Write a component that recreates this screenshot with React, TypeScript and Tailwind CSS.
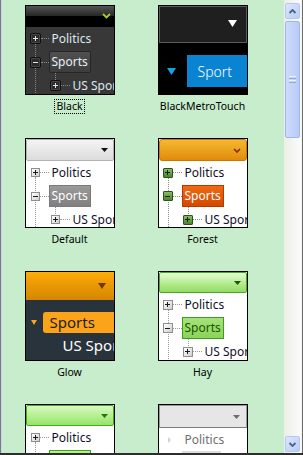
import React from "react";

const TREE = "font-['Noto_Sans',sans-serif] text-[12px] leading-none whitespace-nowrap";

function Glyph({ minus, color }: { minus?: boolean; color: string }) {
  return (
    <svg width="5" height="5" viewBox="0 0 5 5" className="block">
      <path d={minus ? "M0 2.5H5" : "M0 2.5H5M2.5 0V5"} stroke={color} strokeWidth="1" />
    </svg>
  );
}

type Theme = {
  box: string;
  glyph: string;
  line: string;
  text: string;
  hl: string;
  boxPl: string;
  usPl: string;
  conn: string;
  usConn: string;
};

function ClassicTree({ t }: { t: Theme }) {
  return (
    <div className={`relative flex flex-col ${TREE}`}>
      <div className={`absolute left-[9px] top-[16px] h-[200px] border-l border-dotted ${t.line}`} />
      <div className={`absolute left-[29px] top-[45px] h-[10px] border-l border-dotted ${t.line}`} />
      <div className={`relative flex items-center h-[23.5px] shrink-0 ${t.boxPl}`}>
        <div className={`flex items-center justify-center shrink-0 ${t.box}`}>
          <Glyph color={t.glyph} />
        </div>
        <div className={`shrink-0 border-t border-dotted ${t.conn} ${t.line}`} />
        <div className={`pl-[3px] ${t.text}`}>Politics</div>
      </div>
      <div className={`relative flex items-center h-[23.5px] shrink-0 ${t.boxPl}`}>
        <div className={`flex items-center justify-center shrink-0 ${t.box}`}>
          <Glyph minus color={t.glyph} />
        </div>
        <div className={`shrink-0 border-t border-dotted ${t.conn} ${t.line}`} />
        <div className={`flex items-center h-[22px] pl-[2px] pr-[2px] ${t.hl}`}>Sports</div>
      </div>
      <div className={`relative flex items-center h-[23.5px] shrink-0 ${t.usPl}`}>
        <div className={`flex items-center justify-center shrink-0 ${t.box}`}>
          <Glyph color={t.glyph} />
        </div>
        <div className={`shrink-0 border-t border-dotted ${t.usConn} ${t.line}`} />
        <div className={`pl-[3px] ${t.text}`}>US Sports</div>
      </div>
    </div>
  );
}

const grayBox =
  "w-[9px] h-[9px] border border-[#8e8e8e] bg-linear-to-br from-white to-[#cfcfcf]";

const blackTheme: Theme = {
  box: "w-[11px] h-[11px] rounded-[2px] border border-[#101010] bg-[#2b2b2b] shadow-[inset_0_0_0_1px_#474747]",
  glyph: "#e4e4e4",
  line: "border-[#8a8a8a]",
  text: "text-[#dde8f1]",
  hl: "rounded-[2px] border border-[#262626] bg-linear-to-b from-[#505050] to-[#3d3d3d] text-[#e6f0f8]",
  boxPl: "pl-[4px]",
  usPl: "pl-[24px]",
  conn: "w-[8px]",
  usConn: "w-[9px]",
};

const defaultTheme: Theme = {
  box: grayBox,
  glyph: "#1a1a1a",
  line: "border-[#9a9a9a]",
  text: "text-[#10102a]",
  hl: "border border-[#7a7a7a] bg-linear-to-b from-[#9a9a9a] to-[#808080] text-white",
  boxPl: "pl-[5px]",
  usPl: "pl-[25px]",
  conn: "w-[9px]",
  usConn: "w-[10px]",
};

const forestTheme: Theme = {
  box: "w-[10px] h-[10px] rounded-[1px] border border-[#2c5418] bg-linear-to-b from-[#8cbc66] to-[#4f8231]",
  glyph: "#0e2606",
  line: "border-[#8c8c8c]",
  text: "text-[#10102a]",
  hl: "border border-[#b83800] bg-linear-to-b from-[#f06a14] to-[#d24a00] text-white",
  boxPl: "pl-[4px]",
  usPl: "pl-[24px]",
  conn: "w-[9px]",
  usConn: "w-[9px]",
};

const hayTheme: Theme = {
  box: "w-[10px] h-[10px] border border-[#8e8e8e] bg-linear-to-br from-white to-[#cfcfcf]",
  glyph: "#1a1a1a",
  line: "border-[#9a9a9a]",
  text: "text-[#10102a]",
  hl: "border border-[#3f9a1e] bg-linear-to-b from-[#a6e27a] to-[#8ad45a] text-[#1c5200]",
  boxPl: "pl-[4px]",
  usPl: "pl-[24px]",
  conn: "w-[9px]",
  usConn: "w-[9px]",
};

const limeTheme: Theme = {
  box: grayBox,
  glyph: "#1a1a1a",
  line: "border-[#9a9a9a]",
  text: "text-[#10102a]",
  hl: "border border-[#3aa81a] bg-linear-to-b from-[#b8f090] to-[#8ede58] text-[#1c5200]",
  boxPl: "pl-[5px]",
  usPl: "pl-[25px]",
  conn: "w-[9px]",
  usConn: "w-[10px]",
};

function Tile({ cls, children }: { cls: string; children: React.ReactNode }) {
  return (
    <div className={`w-[90px] h-[90px] shrink-0 border border-black overflow-hidden flex flex-col ${cls}`}>
      {children}
    </div>
  );
}

function Cell({ label, focused, children }: { label: string; focused?: boolean; children: React.ReactNode }) {
  return (
    <div className="h-[133px] flex flex-col items-center pt-[5px]">
      {children}
      <div
        className={`mt-[4px] h-[15px] px-[1px] border leading-[13px] text-[10.5px] text-black font-['Noto_Sans',sans-serif] whitespace-nowrap ${
          focused ? "border-dotted border-black" : "border-transparent"
        }`}
      >
        {label}
      </div>
    </div>
  );
}

function Down({ color, w = 7, h = 4 }: { color: string; w?: number; h?: number }) {
  return (
    <svg width={w} height={h} viewBox={`0 0 ${w} ${h}`} className="block">
      <path d={`M0 0H${w}L${w / 2} ${h}Z`} fill={color} />
    </svg>
  );
}

function BlackTile() {
  return (
    <Tile cls="bg-[#383838]">
      <div className="relative h-[21px] shrink-0">
        <div className="h-[10px] bg-linear-to-b from-[#555555] to-[#262626]" />
        <div className="h-[11px] bg-black" />
        <svg className="absolute left-[76px] top-[7px]" width="9" height="6" viewBox="0 0 9 6">
          <path d="M1 1L4.5 4.5L8 1" stroke="#9fd12e" strokeWidth="1.8" fill="none" />
        </svg>
      </div>
      <ClassicTree t={blackTheme} />
    </Tile>
  );
}

function MetroTile() {
  return (
    <Tile cls="bg-black">
      <div className="flex items-start justify-end h-[37px] shrink-0 bg-[#1f1f1f] border border-[#5c5c5c] pt-[13px] pr-[9px]">
        <Down color="#ffffff" w={9} h={7} />
      </div>
      <div className="flex items-center h-[32px] mt-[12px] shrink-0">
        <div className="ml-[8px]">
          <Down color="#1ba1e2" w={9} h={7} />
        </div>
        <div className="ml-[11px] flex-1 h-full flex items-center pl-[11px] bg-[#0a84d2] text-white text-[14px] font-light font-['Noto_Sans',sans-serif] whitespace-nowrap">
          Sport
        </div>
      </div>
    </Tile>
  );
}

function DefaultTile() {
  return (
    <Tile cls="bg-white">
      <div className="flex items-center justify-end h-[22px] shrink-0 rounded-[2px] border border-[#b2b2b2] bg-linear-to-b from-[#f4f4f4] to-[#dcdcdc] pr-[5px]">
        <Down color="#111111" />
      </div>
      <ClassicTree t={defaultTheme} />
    </Tile>
  );
}

function ForestTile() {
  return (
    <Tile cls="bg-white">
      <div className="flex items-center justify-end h-[22px] shrink-0 rounded-[3px] border border-[#c77800] bg-linear-to-b from-[#f5b92f] to-[#df8c08] pr-[5px]">
        <svg width="8" height="5" viewBox="0 0 8 5" className="block">
          <path d="M1 1L4 4L7 1" stroke="#8a2400" strokeWidth="1.6" fill="none" />
        </svg>
      </div>
      <ClassicTree t={forestTheme} />
    </Tile>
  );
}

function GlowTile() {
  return (
    <Tile cls="bg-[#29333b]">
      <div className="flex items-center justify-end h-[28px] shrink-0 bg-linear-to-b from-[#ffab0a] to-[#d48600] pr-[8px]">
        <Down color="#6e3800" w={8} h={6} />
      </div>
      <div className="h-[12px] shrink-0" />
      <div className="flex items-center h-[21px] shrink-0 font-['Noto_Sans',sans-serif] text-[15px] whitespace-nowrap">
        <div className="ml-[5px]">
          <Down color="#f7a51c" w={6} h={5} />
        </div>
        <div className="ml-[6px] flex-1 h-full flex items-center pl-[7px] rounded-l-[3px] bg-[#fba41a] text-[#1c1c1c]">
          Sports
        </div>
      </div>
      <div className="flex items-center h-[25px] shrink-0 font-['Noto_Sans',sans-serif] text-[15px] whitespace-nowrap text-white">
        <svg width="5" height="8" viewBox="0 0 5 8" className="block ml-[25px]">
          <path d="M0 0L5 4L0 8Z" fill="#ffffff" />
        </svg>
        <div className="ml-[12px]">US Sports</div>
      </div>
    </Tile>
  );
}

function HayTile() {
  return (
    <Tile cls="bg-white">
      <div className="flex items-center justify-end h-[21px] shrink-0 rounded-[2px] border border-[#4ea52c] bg-linear-to-b from-[#e6fbd6] via-[#b9ed94] to-[#92dc62] pr-[5px]">
        <Down color="#1b5a06" />
      </div>
      <ClassicTree t={hayTheme} />
    </Tile>
  );
}

function LimeTile() {
  return (
    <Tile cls="bg-white">
      <div className="flex items-center justify-end h-[21px] shrink-0 rounded-[2px] border border-[#3cb01e] bg-linear-to-b from-[#d6fabd] to-[#96e466] pr-[5px]">
        <Down color="#247a0c" />
      </div>
      <ClassicTree t={limeTheme} />
    </Tile>
  );
}

function MetroLightTile() {
  return (
    <Tile cls="bg-white">
      <div className="flex items-center justify-end h-[23px] shrink-0 border border-[#9a9a9a] border-b-[#7a7a7a] bg-[#e6e6e6] pr-[6px]">
        <Down color="#6e6e6e" />
      </div>
      <div className={`flex items-center h-[23px] shrink-0 ${TREE}`}>
        <svg width="3" height="6" viewBox="0 0 3 6" className="block ml-[9px]">
          <path d="M0 0L3 3L0 6Z" fill="#d4d4d4" />
        </svg>
        <div className="ml-[14px] text-[#707070]">Politics</div>
      </div>
      <div className="ml-[23px] w-[39px] h-[22px] shrink-0 bg-[#dedede]" />
    </Tile>
  );
}

function ScrollBtn({ up }: { up?: boolean }) {
  return (
    <div className="w-[15px] h-[16px] shrink-0 rounded-[2px] border border-[#b5c9f5] bg-linear-to-br from-[#dbe5fe] to-[#b9cdf8] flex items-center justify-center">
      <svg width="7" height="5" viewBox="0 0 7 5" className="block">
        <path d={up ? "M0.5 4L3.5 1L6.5 4" : "M0.5 1L3.5 4L6.5 1"} stroke="#4d6185" strokeWidth="1.8" fill="none" />
      </svg>
    </div>
  );
}

function Scrollbar() {
  return (
    <div className="w-[17px] h-full shrink-0 flex flex-col items-center pt-[3px] pb-[1px] bg-linear-to-r from-[#eeede6] to-[#fcfcfa]">
      <ScrollBtn up />
      <div className="mt-[2px] w-[15px] h-[117px] shrink-0 rounded-[2px] border border-[#9fb6ea] bg-linear-to-r from-[#cddbfd] to-[#b8cbf7] flex flex-col items-center justify-center gap-[1px]">
        <div className="w-[7px] h-[1px] bg-[#eef3ff]" />
        <div className="w-[7px] h-[1px] bg-[#8ea8ec]" />
        <div className="w-[7px] h-[1px] bg-[#eef3ff]" />
        <div className="w-[7px] h-[1px] bg-[#8ea8ec]" />
      </div>
      <div className="flex-1" />
      <ScrollBtn />
    </div>
  );
}

export default function App() {
  return (
    <div className="w-[303px] h-[455px] flex overflow-hidden bg-[#c7edcc] border-b-2 border-b-[#2e2e2e]">
      <div className="w-[1px] h-full shrink-0 bg-[#7c7c7c]" />
      <div className="w-[1px] h-full shrink-0 bg-[#c3d6ef]" />
      <div className="w-[282px] h-full shrink-0 overflow-hidden pl-[1px]">
        <div className="grid grid-cols-[133px_133px]">
          <Cell label="Black" focused>
            <BlackTile />
          </Cell>
          <Cell label="BlackMetroTouch">
            <MetroTile />
          </Cell>
          <Cell label="Default">
            <DefaultTile />
          </Cell>
          <Cell label="Forest">
            <ForestTile />
          </Cell>
          <Cell label="Glow">
            <GlowTile />
          </Cell>
          <Cell label="Hay">
            <HayTile />
          </Cell>
          <Cell label="Lime">
            <LimeTile />
          </Cell>
          <Cell label="Metro">
            <MetroLightTile />
          </Cell>
        </div>
      </div>
      <Scrollbar />
      <div className="w-[1px] h-full shrink-0 bg-[#f4f4f4]" />
      <div className="w-[1px] h-full shrink-0 bg-[#6c6c6c]" />
    </div>
  );
}
